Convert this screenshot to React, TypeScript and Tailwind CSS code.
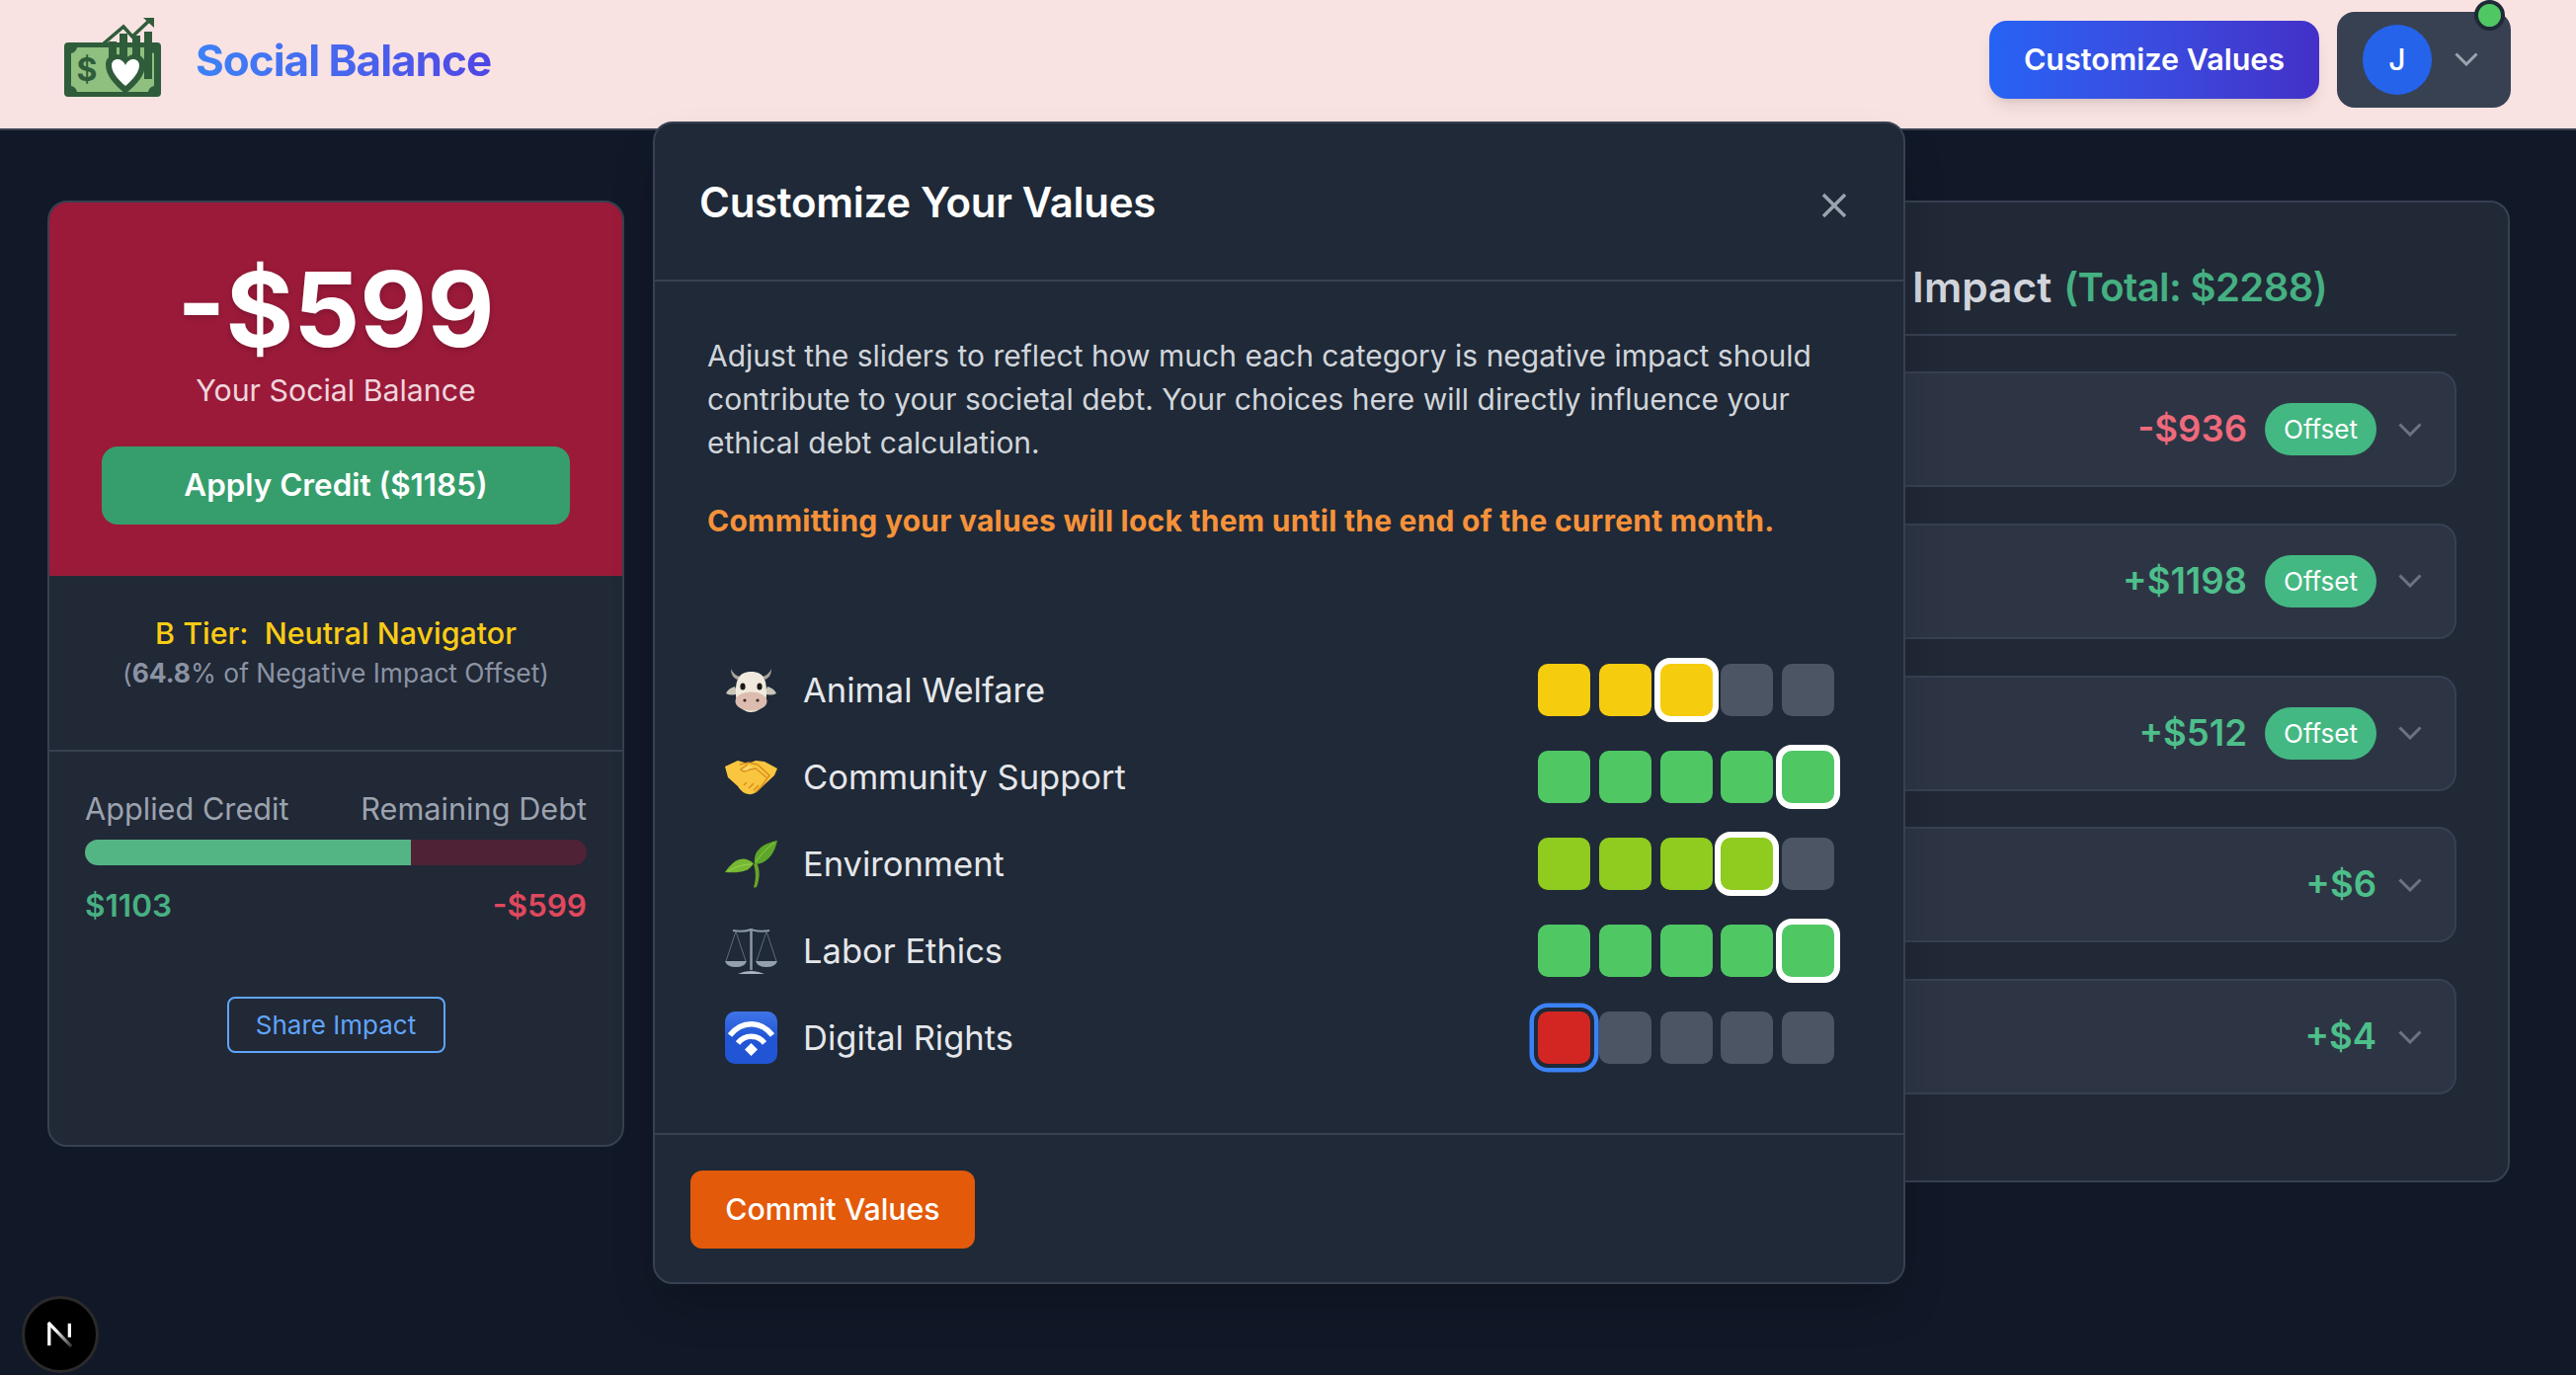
const categories = [
  { name: "Animal Welfare", icon: "cow", value: 3, color: "bg-[#f6cc0f]" },
  { name: "Community Support", icon: "hands", value: 5, color: "bg-[#4fc864]" },
  { name: "Environment", icon: "plant", value: 4, color: "bg-[#8fcc1f]" },
  { name: "Labor Ethics", icon: "scales", value: 5, color: "bg-[#4fc864]" },
  { name: "Digital Rights", icon: "wifi", value: 1, color: "bg-[#d32622]" },
];

const impacts = [
  { id: 1, amount: "-$936", offset: true },
  { id: 2, amount: "+$1198", offset: true },
  { id: 3, amount: "+$512", offset: true },
  { id: 4, amount: "+$6", offset: false },
  { id: 5, amount: "+$4", offset: false },
];

function Chevron({ className }: { className: string }) {
  return (
    <svg viewBox="0 0 24 14" width={24} height={14} fill="none" stroke="currentColor" strokeWidth={3} className={className}>
      <path d="M1.5 1.5 12 12 22.5 1.5" />
    </svg>
  );
}

function Logo() {
  return (
    <svg viewBox="0 0 98 81" width={98} height={81} className="-mt-[5px]">
      <rect x={0} y={26} width={98} height={55} rx={4} fill="#2f5c3a" />
      <path d="M7 37 Q12 36 13 31 H85 Q86 36 91 37 V70 Q86 71 85 76 H13 Q12 71 7 70 Z" fill="#8fc07f" />
      <text x={23} y={65} textAnchor="middle" fontSize={32} fontWeight={700} fill="#2f5c3a" fontFamily="Inter, sans-serif">$</text>
      <rect x={45} y={25} width={8} height={20} fill="#2f5c3a" />
      <rect x={56} y={17} width={8} height={26} fill="#2f5c3a" />
      <rect x={69} y={19} width={8} height={24} fill="#2f5c3a" />
      <rect x={81} y={15} width={8} height={48} fill="#2f5c3a" />
      <path d="M40 27 60 10 69 20 87 3" fill="none" stroke="#2f5c3a" strokeWidth={3.5} />
      <path d="M80 1 H91 V11 Z" fill="#2f5c3a" />
      <path d="M62 78 C50 68 42 59 42 48 C42 38 56 34 62 43 C68 34 82 38 82 48 C82 59 74 68 62 78 Z" fill="#2f5c3a" />
      <path d="M62 70 C54 63 48 56 48 49 C48 42 58 40 62 49 C66 40 76 42 76 49 C76 56 70 63 62 70 Z" fill="#ffffff" />
    </svg>
  );
}

function EmojiIcon({ kind }: { kind: string }) {
  if (kind === "cow") {
    return (
      <svg viewBox="0 0 53 46" width={53} height={46}>
        <path d="M6 1 Q9 8 16 9 L12 12 Q6 9 6 1 Z M47 1 Q44 8 37 9 L41 12 Q47 9 47 1 Z" fill="#a8a49a" />
        <path d="M10 19 Q3 21 1 26 Q7 29 13 26 Z M43 19 Q50 21 52 26 Q46 29 40 26 Z" fill="#c9c5b8" />
        <path d="M26.5 4 C40 4 42 14 42 24 C43 36 36 45 26.5 45 C17 45 10 36 11 24 C11 14 13 4 26.5 4 Z" fill="#efeadd" />
        <ellipse cx={26.5} cy={34} rx={16} ry={9.5} fill="#dcbcae" />
        <ellipse cx={18} cy={19} rx={2.6} ry={3.6} fill="#1c1a18" />
        <ellipse cx={35} cy={19} rx={2.6} ry={3.6} fill="#1c1a18" />
        <circle cx={20} cy={33} r={1.6} fill="#3a2a24" />
        <circle cx={33} cy={33} r={1.6} fill="#3a2a24" />
      </svg>
    );
  }
  if (kind === "hands") {
    return (
      <svg viewBox="0 0 53 36" width={53} height={36}>
        <path d="M0 7 L13 1 L23 4 L31 1 L40 2 L53 9 L50 16 L36 29 Q30 36 24 35 Q17 34 13 27 L3 18 Z" fill="#fbc63f" />
        <path d="M15 5 L24 3 L33 5 L45 16 L37 27 L31 33" fill="none" stroke="#d98e1f" strokeWidth={1.5} />
        <path d="M23 5 L16 10 Q19 14 25 10 L31 9 L42 18" fill="#fdd868" stroke="#d98e1f" strokeWidth={1.5} />
        <path d="M24 29 L29 24 M29 31 L34 26 M19 26 L22 23" stroke="#d98e1f" strokeWidth={1.5} />
      </svg>
    );
  }
  if (kind === "plant") {
    return (
      <svg viewBox="0 0 53 48" width={53} height={48}>
        <path d="M29 47 C32 38 31 30 29 24 L32 22 C36 30 35 40 32 47 Q30 48 29 47 Z" fill="#6aa329" />
        <path d="M30 24 C28 10 38 3 53 0 C50 14 42 24 30 24 Z" fill="#5da62a" />
        <path d="M29 23 C20 15 10 17 0 32 C14 33 24 32 29 23 Z" fill="#77b733" />
        <path d="M31 22 C36 14 42 8 50 2" fill="none" stroke="#8ccb46" strokeWidth={1} />
        <path d="M27 24 C18 24 10 27 3 31" fill="none" stroke="#9ad650" strokeWidth={1} />
      </svg>
    );
  }
  if (kind === "scales") {
    return (
      <svg viewBox="0 0 53 50" width={53} height={50} fill="none">
        <path d="M26.5 2 V44" stroke="#8d97a5" strokeWidth={2.5} />
        <path d="M8 4 Q18 6 26.5 3 Q35 6 45 4" stroke="#8d97a5" strokeWidth={2} />
        <path d="M11 5 L1 35 M11 5 L21 35 M42 5 L32 35 M42 5 L52 35" stroke="#5e6a7a" strokeWidth={1} />
        <path d="M0 35 H22 Q20 41 11 41 Q2 41 0 35 Z M31 35 H53 Q51 41 42 41 Q33 41 31 35 Z" fill="#94a0ae" />
        <path d="M13 48 Q26 42 40 48 Z" fill="#aab4c0" />
      </svg>
    );
  }
  return (
    <div className="flex h-[53px] w-[53px] items-center justify-center rounded-[10px] bg-gradient-to-b from-[#3f74e8] via-[#2155d6] to-[#2155d6]">
      <svg viewBox="0 0 53 53" width={53} height={53} fill="none" stroke="#ffffff" strokeWidth={5.5}>
        <path d="M5 24 C17 9 36 9 48 24" />
        <path d="M13 32 C20 23 33 23 40 32" />
        <path d="M26.5 32 L33 38.5 L26.5 45 L20 38.5 Z" fill="#ffffff" stroke="none" />
      </svg>
    </div>
  );
}

function Rating({ value, color }: { value: number; color: string }) {
  return (
    <div className="flex gap-[8.75px]">
      {[1, 2, 3, 4, 5].map((n) => {
        const selected = n === value;
        return (
          <div
            key={n}
            className={`h-[53px] w-[53px] rounded-[10px] ${n <= value ? color : "bg-[#4b5563]"} ${
              selected && value === 1
                ? "ring-[4.5px] ring-[#3b82f6] ring-offset-4 ring-offset-[#1f2937]"
                : selected
                  ? "z-10 ring-[6px] ring-white"
                  : ""
            }`}
          />
        );
      })}
    </div>
  );
}

export default function App() {
  return (
    <div className="relative h-[1392px] w-[2608px] overflow-hidden bg-[#111827] font-['Inter',sans-serif]">
      <header className="flex h-[132px] items-center justify-between border-b-2 border-[#374151] bg-[#f9e2e2] pb-[10px] pl-[65px] pr-[66px]">
        <div className="flex items-center gap-[35px]">
          <Logo />
          <span className="mt-[2px] bg-gradient-to-r from-[#3b82f6] to-[#4f46e5] bg-clip-text text-[44px] font-bold tracking-[-1px] text-transparent">
            Social Balance
          </span>
        </div>
        <div className="flex items-center gap-[18px]">
          <button className="h-[79px] w-[334px] rounded-[18px] bg-gradient-to-r from-[#2563f5] to-[#4330c8] text-[30.5px] font-semibold text-white shadow-lg">
            Customize Values
          </button>
          <div className="relative flex h-[97px] w-[176px] items-center gap-[23px] rounded-[18px] bg-[#374151] pl-[26px]">
            <div className="flex h-[71px] w-[70px] items-center justify-center rounded-full bg-[#2563eb] text-[30px] font-medium text-white">J</div>
            <Chevron className="text-[#9ca3af]" />
            <div className="absolute right-[6px] top-[-12px] h-[31px] w-[31px] rounded-full border-4 border-[#1f2937] bg-[#4fc864]" />
          </div>
        </div>
      </header>

      <main className="flex gap-[48px] pl-[48px] pr-[67px] pt-[71px]">
        <section className="h-[958px] w-[584px] shrink-0 overflow-hidden rounded-[20px] border-2 border-[#374151] bg-[#212836]">
          <div className="flex h-[378px] flex-col items-center bg-[#9b1a3a] pt-[56px]">
            <div className="text-[105px] font-bold leading-[104px] text-white [text-shadow:0_2px_6px_rgba(0,0,0,0.2)]">-$599</div>
            <div className="mt-[6px] text-[30.3px] leading-[48px] text-[#f0d5dc]">Your Social Balance</div>
            <button className="mt-[33px] h-[79px] w-[474px] rounded-[16px] bg-[#369e6c] text-[31.4px] font-semibold text-white">
              Apply Credit ($1185)
            </button>
          </div>
          <div className="h-[178px] border-b-2 border-[#374151] pt-[38px] text-center">
            <div className="text-[30.4px] font-medium leading-[40px] text-[#facc15]">B Tier:&nbsp; Neutral Navigator</div>
            <div className="text-[26.4px] leading-[40px] text-[#8b93a3]">
              (<span className="font-bold">64.8</span>% of Negative Impact Offset)
            </div>
          </div>
          <div className="px-[36px] pt-[38px]">
            <div className="flex justify-between text-[30.7px] leading-[40px] text-[#9ca3af]">
              <span>Applied Credit</span>
              <span>Remaining Debt</span>
            </div>
            <div className="mt-[11px] flex h-[26px] overflow-hidden rounded-full bg-[#4f2236]">
              <div className="h-full w-[330px] bg-[#54b584]" />
            </div>
            <div className="mt-[21px] flex justify-between text-[31.5px] font-semibold leading-[40px]">
              <span className="text-[#48b082]">$1103</span>
              <span className="text-[#e0485e]">-$599</span>
            </div>
            <button className="mx-auto mt-[72px] block h-[57px] w-[221px] rounded-[8px] border-2 border-[#60a5fa] text-[26px] text-[#60a5fa]">
              Share Impact
            </button>
          </div>
        </section>

        <section className="h-[994px] flex-1 rounded-[20px] border-2 border-[#374151] bg-[#212836] pl-[54px] pr-[52px] pt-[59px]">
          <h2 className="flex h-[76px] justify-end gap-[12px] border-b-2 border-[#374151] pr-[131px] text-[42.5px] font-semibold leading-[54px] text-[#d1d5db]">
            <span>Impact</span>
            <span className="text-[40px] tracking-[-0.6px] text-[#45b082]">(Total: $2288)</span>
          </h2>
          <div className="mt-[36px] flex flex-col gap-[36.75px]">
            {impacts.map((item) => (
              <div key={item.id} className="flex h-[117px] items-center justify-end rounded-[18px] border-2 border-[#374151] bg-[#2d3545] pr-[33px]">
                <span className={`text-[36.5px] font-semibold ${item.amount[0] === "-" ? "text-[#ef6a7c]" : "text-[#4dbf8a]"}`}>{item.amount}</span>
                {item.offset && (
                  <span className="ml-[18px] flex h-[53px] w-[113px] items-center justify-center rounded-full bg-[#44b882] text-[26px] text-white">Offset</span>
                )}
                <Chevron className="ml-[22px] text-[#6b7280]" />
              </div>
            ))}
          </div>
        </section>
      </main>

      <div className="absolute left-[661px] top-[123px] h-[1177px] w-[1268px] rounded-[20px] border-2 border-[#374151] bg-[#1f2937] shadow-2xl">
        <div className="flex h-[160px] items-center justify-between border-b-2 border-[#374151] pl-[45px] pr-[57px]">
          <h2 className="text-[42px] font-semibold tracking-[-0.3px] text-white">Customize Your Values</h2>
          <svg viewBox="0 0 26 26" width={26} height={26} fill="none" stroke="#9ca3af" strokeWidth={3.5} className="mt-[8px]">
            <path d="M2 2 24 24 M24 2 2 24" />
          </svg>
        </div>
        <div className="h-[862px] pl-[53px] pr-[70px] pt-[53px]">
          <p className="text-[30px] leading-[44px] text-[#d1d5db]">
            Adjust the sliders to reflect how much each category is negative impact should contribute to your societal debt. Your choices here will directly influence your ethical debt calculation.
          </p>
          <p className="mt-[35px] text-[30px] font-bold leading-[44px] tracking-[0.24px] text-[#f6923a]">
            Committing your values will lock them until the end of the current month.
          </p>
          <div className="mt-[123px] flex flex-col gap-[35px]">
            {categories.map((c) => (
              <div key={c.name} className="flex h-[53px] items-center justify-between">
                <div className="flex items-center pl-[18px]">
                  <div className="flex w-[53px] justify-center">
                    <EmojiIcon kind={c.icon} />
                  </div>
                  <span className="ml-[26px] text-[34.5px] text-[#e5e7eb]">{c.name}</span>
                </div>
                <Rating value={c.value} color={c.color} />
              </div>
            ))}
          </div>
        </div>
        <div className="border-t-2 border-[#374151] pl-[36px] pt-[36px]">
          <button className="h-[79px] w-[288px] rounded-[12px] bg-[#e35a0a] text-[30.3px] font-medium text-white">Commit Values</button>
        </div>
      </div>

      <div className="absolute left-[22px] top-[1312px] flex h-[78px] w-[78px] items-center justify-center rounded-full border-[3px] border-[#2a2a2a] bg-black">
        <svg viewBox="0 0 30 30" width={28} height={28}>
          <defs>
            <linearGradient id="nextFade" x1="0.3" y1="0.3" x2="1" y2="1">
              <stop offset="0" stopColor="#ffffff" />
              <stop offset="1" stopColor="#ffffff" stopOpacity="0.2" />
            </linearGradient>
          </defs>
          <path d="M3 3 V27" stroke="#ffffff" strokeWidth={3.5} fill="none" />
          <path d="M2 2 27 28" stroke="url(#nextFade)" strokeWidth={3.5} fill="none" />
          <path d="M25 3 V18" stroke="#ffffff" strokeWidth={3.5} fill="none" />
        </svg>
      </div>
    </div>
  );
}
